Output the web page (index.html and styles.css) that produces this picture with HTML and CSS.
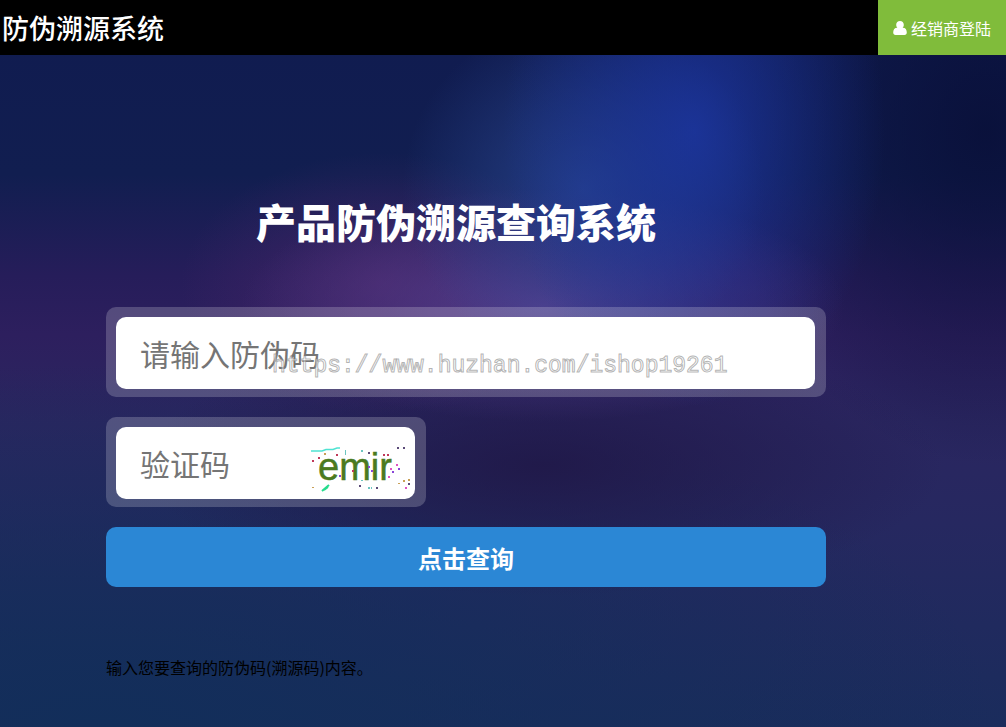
FILE: index.html
```html
<!DOCTYPE html>
<html lang="zh-CN">
<head>
    <meta charset="UTF-8">
    <meta name="viewport" content="width=device-width, initial-scale=1.0">
    <title>产品防伪溯源查询系统</title>
    <link rel="stylesheet" href="styles.css">
</head>
<body>
    <header class="header">
        <div class="logo">防伪溯源系统</div>
        <a class="login" href="#">
            <svg class="login-icon" viewBox="0 0 14 14" aria-hidden="true">
                <path d="M7 0C9.200 0 10.800 1.600 10.800 3.700C10.800 5 10.300 6 9.600 6.700C12.600 6.700 13.800 8.700 13.800 11.600C13.800 13.100 12.900 14 11.500 14H2.500C1.100 14 0.200 13.100 0.200 11.600C0.200 8.700 1.400 6.700 4.400 6.700C3.700 6 3.200 5 3.200 3.700C3.200 1.600 4.800 0 7 0Z"/>
            </svg>
            <span>经销商登陆</span>
        </a>
    </header>
    <main class="main">
        <h1 class="title">产品防伪溯源查询系统</h1>
        <form class="search">
            <div class="field">
                <input class="input" type="text" name="code" placeholder="请输入防伪码" aria-label="请输入防伪码">
                <span class="watermark">https://www.huzhan.com/ishop19261</span>
            </div>
            <div class="field field-short">
                <input class="input" type="text" name="captcha" placeholder="验证码" aria-label="验证码">
                <svg class="captcha" viewBox="0 0 104 50" aria-hidden="true">
                    <text class="captcha-text" x="8" y="36">emir</text>
                    <path d="M1 7H12L16 5.500H23L27 4H30" stroke="#4fe3d2" stroke-width="1.500" fill="none"/>
                    <path d="M12 47L19 41M14 46L18 43" stroke="#25dc8c" stroke-width="2" fill="none"/>
                    <g fill="#c0395a">
                        <rect x="2" y="16" width="2" height="2"/>
                        <rect x="8" y="13" width="2" height="2"/>
                        <rect x="26" y="10" width="2" height="2"/>
                        <rect x="42" y="26" width="2" height="2"/>
                        <rect x="73" y="10" width="2" height="2"/>
                        <rect x="77" y="10" width="2" height="2"/>
                    </g>
                    <g fill="#5a4a78">
                        <rect x="58" y="8" width="2" height="2"/>
                        <rect x="87" y="3" width="2" height="2"/>
                        <rect x="93" y="3" width="2" height="2"/>
                        <rect x="49" y="41" width="2" height="2"/>
                        <rect x="66" y="43" width="2" height="2"/>
                        <rect x="98" y="39" width="2" height="2"/>
                    </g>
                    <g fill="#8a45d8">
                        <rect x="58" y="22" width="2" height="2"/>
                        <rect x="61" y="26" width="2" height="2"/>
                        <rect x="82" y="27" width="2" height="2"/>
                        <rect x="88" y="24" width="2" height="2"/>
                        <rect x="29" y="31" width="2" height="2"/>
                    </g>
                    <g fill="#e052c4">
                        <rect x="80" y="24" width="2" height="2"/>
                        <rect x="86" y="20" width="2" height="2"/>
                        <rect x="78" y="32" width="2" height="2"/>
                        <rect x="95" y="43" width="2" height="2"/>
                    </g>
                    <g fill="#6cc5c0">
                        <rect x="35" y="6" width="1" height="5"/>
                        <rect x="51" y="6" width="2" height="2"/>
                        <rect x="58" y="43" width="2" height="2"/>
                        <rect x="61" y="43" width="1" height="2"/>
                        <rect x="51" y="36" width="2" height="1"/>
                    </g>
                    <g fill="#c9a056">
                        <rect x="2" y="43" width="2" height="1"/>
                        <rect x="14" y="9" width="2" height="2"/>
                        <rect x="93" y="36" width="2" height="2"/>
                        <rect x="98" y="35" width="2" height="2"/>
                        <rect x="88" y="39" width="2" height="1"/>
                    </g>
                </svg>
            </div>
            <button class="submit" type="submit">点击查询</button>
        </form>
        <p class="tip">输入您要查询的防伪码(溯源码)内容。</p>
    </main>
</body>
</html>
```
FILE: styles.css
```css
* {
    box-sizing: border-box;
}
body {
    margin: 0;
    min-height: 100vh;
    font-family: "Noto Sans CJK SC", sans-serif;
    font-size: 16px;
    color: #000;
    background-color: #1c2558;
    background-image:
        radial-gradient(ellipse 19% 38% at 69% 18%, rgba(28, 54, 164, 0.8), rgba(28, 54, 164, 0.4) 50%, rgba(28, 54, 164, 0)),
        radial-gradient(ellipse 18% 24% at 58% 26%, rgba(42, 72, 150, 0.75), rgba(42, 72, 150, 0.4) 50%, rgba(42, 72, 150, 0)),
        radial-gradient(ellipse 30% 16% at 54% 42%, rgba(92, 68, 150, 0.8), rgba(92, 68, 150, 0.35) 50%, rgba(92, 68, 150, 0)),
        radial-gradient(ellipse 20% 18% at 38% 39%, rgba(84, 42, 112, 0.6), rgba(84, 42, 112, 0)),
        radial-gradient(ellipse 40% 18% at 54% 64%, rgba(32, 24, 72, 0.9), rgba(32, 24, 72, 0)),
        radial-gradient(ellipse 26% 46% at 98% 18%, rgba(8, 14, 54, 0.8), rgba(8, 14, 54, 0)),
        radial-gradient(ellipse 90% 50% at 10% 100%, rgba(18, 46, 90, 1), rgba(18, 46, 90, 0)),
        linear-gradient(180deg, #101b50 0%, #111e50 24%, #261d5a 38%, #2d1f5e 46%, #2a2660 58%, #262860 72%, #1a2c5c 100%);
}
.header {
    display: flex;
    justify-content: space-between;
    height: 55px;
    background-color: #000;
    color: #fff;
}
.logo {
    padding: 2px 0 0 2px;
    font-size: 27px;
    font-weight: 500;
    line-height: 52px;
}
.login {
    display: flex;
    align-items: center;
    gap: 4px;
    padding: 0 15px;
    background-color: #80bc3b;
    color: #fff;
    text-decoration: none;
}
.login-icon {
    width: 14px;
    height: 14px;
    fill: #fff;
}
.main {
    max-width: 932px;
    padding: 136px 106px 40px;
}
.title {
    margin: 0 0 56px;
    padding-right: 20px;
    color: #fff;
    font-size: 40px;
    font-weight: 900;
    line-height: 60px;
    text-align: center;
}
.search {
    display: flex;
    flex-direction: column;
    gap: 20px;
}
.field {
    position: relative;
    height: 90px;
    padding: 10px 11px 8px 10px;
    border-radius: 10px;
    background-color: rgba(255, 255, 255, 0.2);
}
.field-short {
    max-width: 320px;
}
.input {
    display: block;
    width: 100%;
    height: 72px;
    padding: 0 24px;
    border: 0;
    border-radius: 10px;
    background-color: #fff;
    font-family: inherit;
    font-size: 30px;
}
.input::placeholder {
    color: #757575;
}
.watermark {
    position: absolute;
    left: 166px;
    top: 43px;
    font-family: "Liberation Mono", monospace;
    font-size: 23px;
    line-height: 32px;
    color: rgba(255, 255, 255, 0.5);
    -webkit-text-stroke: 1px rgba(130, 130, 130, 0.6);
    pointer-events: none;
}
.captcha {
    position: absolute;
    right: 12px;
    top: 27px;
    width: 104px;
    height: 50px;
}
.captcha-text {
    font-family: "Liberation Sans", sans-serif;
    font-size: 38px;
    fill: #4b7a20;
    stroke: #4b7a20;
    stroke-width: 0.5;
}
.submit {
    height: 60px;
    border: 0;
    border-radius: 10px;
    background-color: #2b87d5;
    color: #fff;
    font-family: inherit;
    font-size: 24px;
    font-weight: bold;
}
.tip {
    margin: 68px 0 0;
    line-height: 24px;
}
```
